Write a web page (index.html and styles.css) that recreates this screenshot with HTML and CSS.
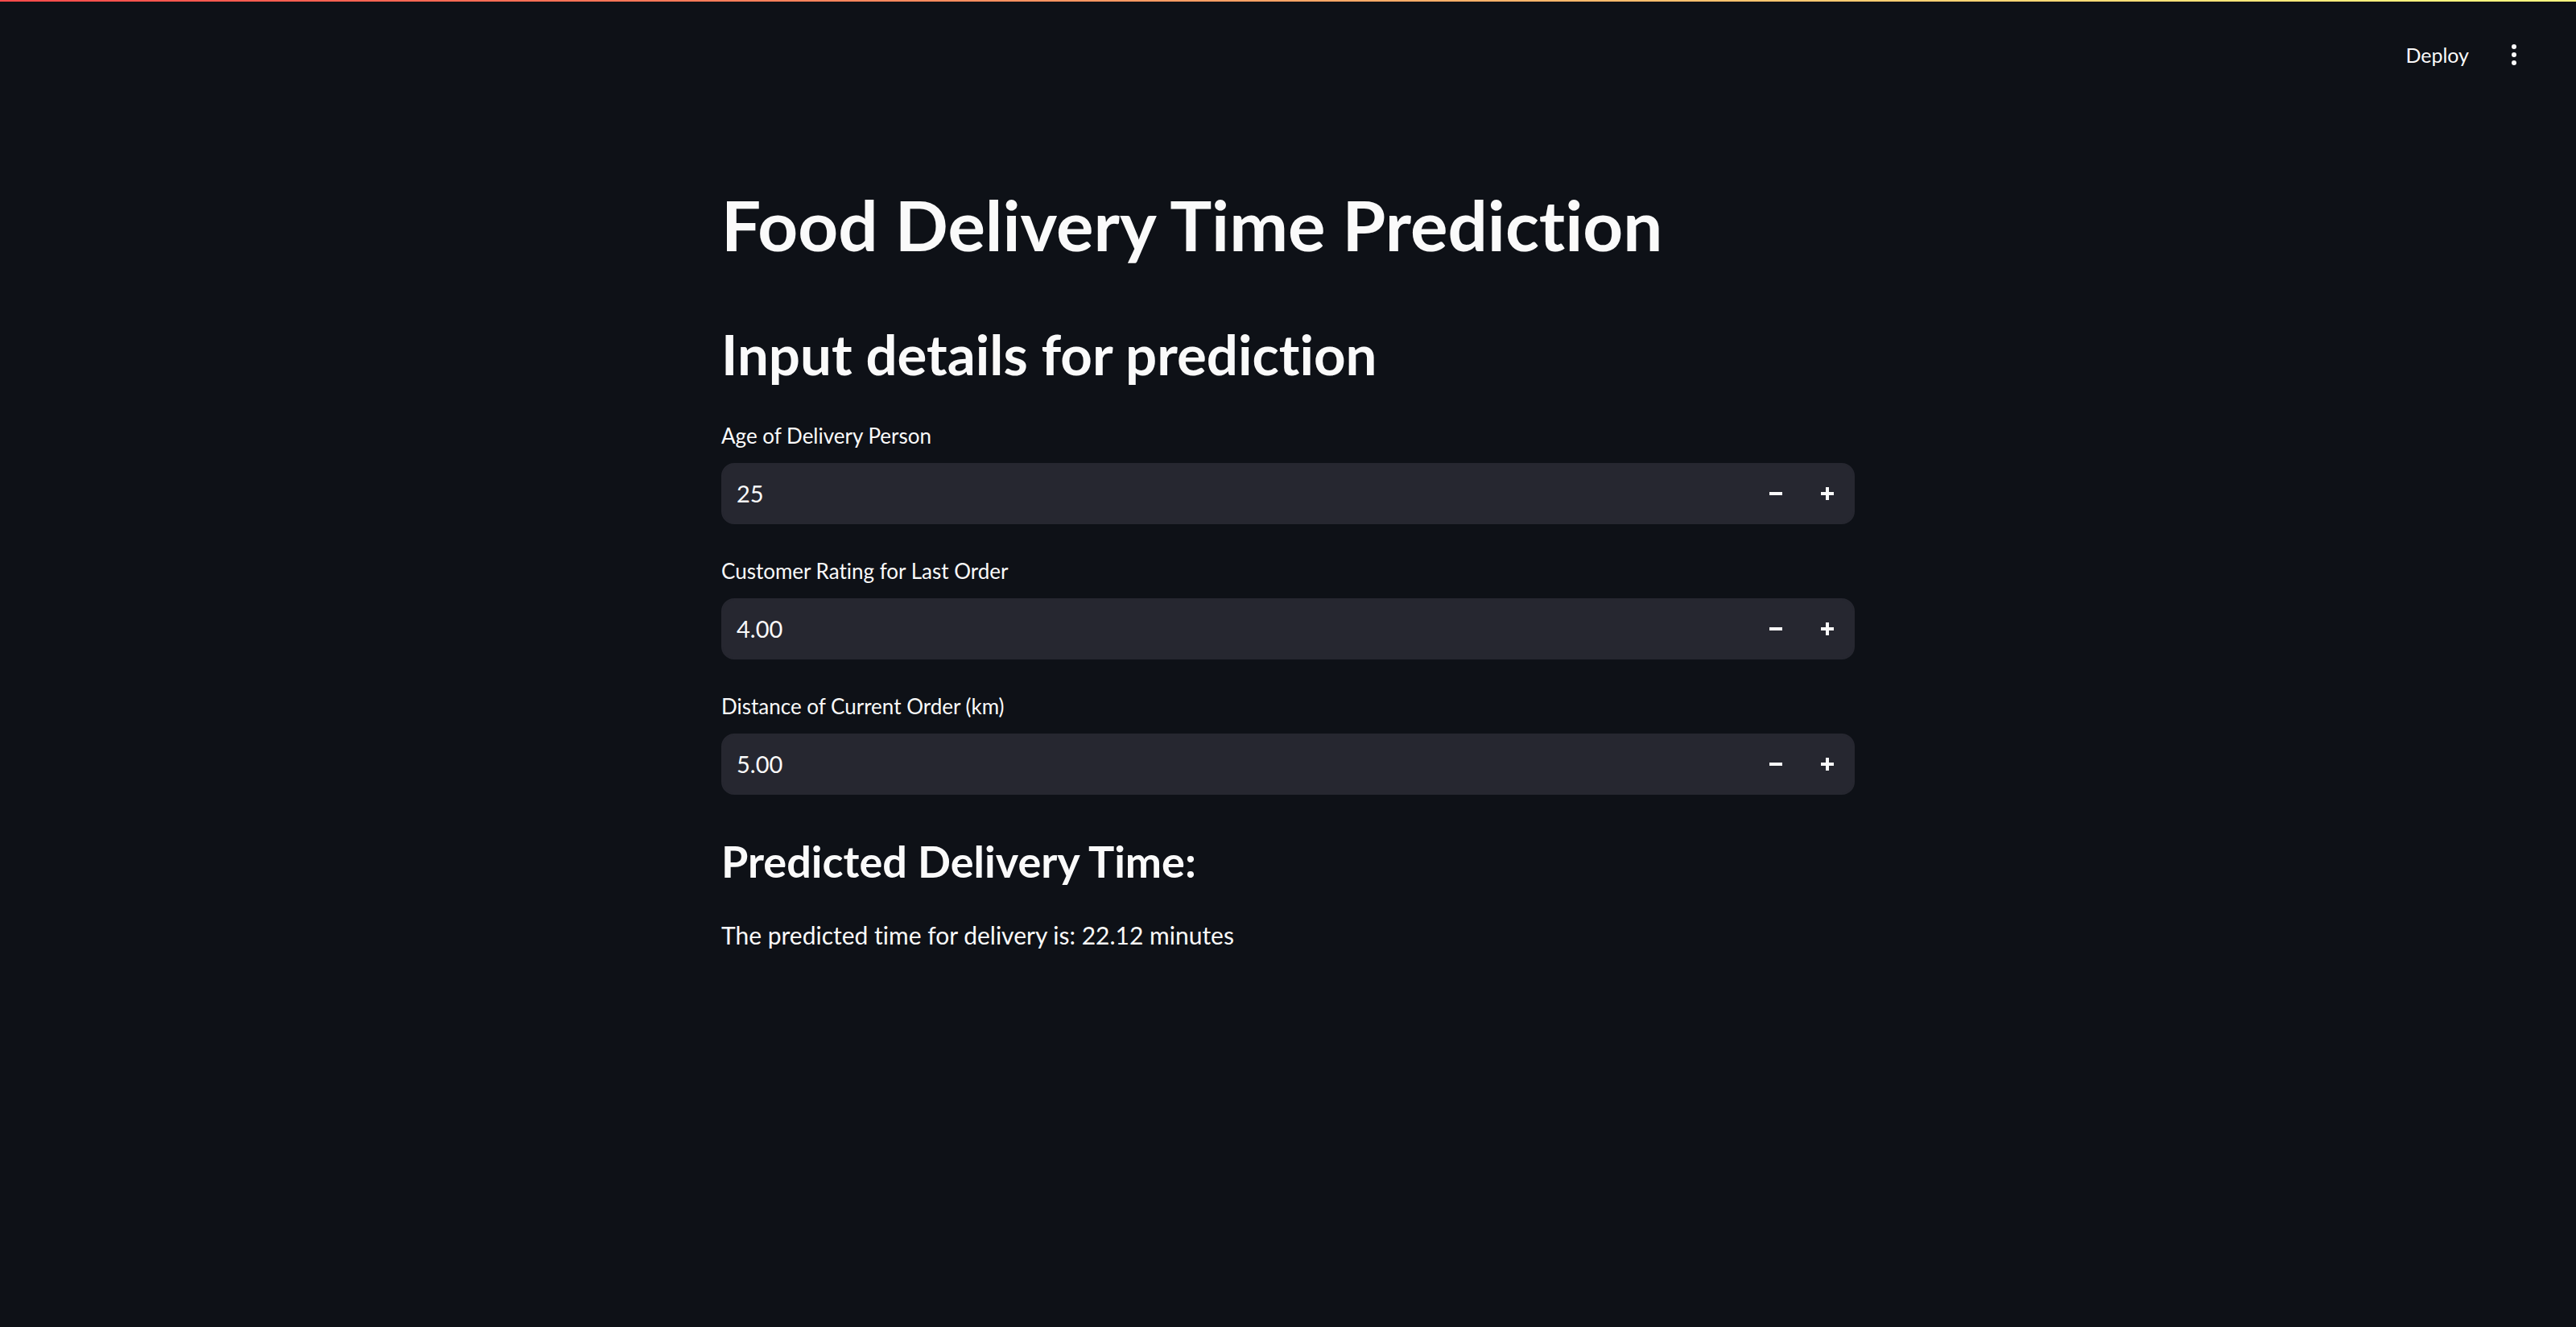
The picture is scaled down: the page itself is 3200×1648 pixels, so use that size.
FILE: index.html
```html
<!DOCTYPE html>
<html lang="en">
<head>
<meta charset="utf-8">
<title>Food Delivery Time Prediction</title>
<link rel="stylesheet" href="styles.css">
</head>
<body>
<div class="deco"></div>
<header class="topbar">
  <div class="toolbar">
    <span class="deploy">Deploy</span>
    <span class="menu" aria-label="Main menu">
      <svg width="6" height="26" viewBox="0 0 6 26"><circle cx="3" cy="3" r="3" fill="#fafafa"/><circle cx="3" cy="13" r="3" fill="#fafafa"/><circle cx="3" cy="23" r="3" fill="#fafafa"/></svg>
    </span>
  </div>
</header>
<main class="block">
  <h1 class="title">Food Delivery Time Prediction</h1>
  <h2 class="subtitle">Input details for prediction</h2>

  <div class="field">
    <label class="label">Age of Delivery Person</label>
    <div class="numinput">
      <span class="value">25</span>
      <span class="step"><svg width="16" height="16" viewBox="0 0 16 16"><rect x="0" y="6" width="16" height="4" fill="#fafafa"/></svg></span>
      <span class="step"><svg width="16" height="16" viewBox="0 0 16 16"><rect x="0" y="6" width="16" height="4" fill="#fafafa"/><rect x="6" y="0" width="4" height="16" fill="#fafafa"/></svg></span>
    </div>
  </div>

  <div class="field">
    <label class="label">Customer Rating for Last Order</label>
    <div class="numinput">
      <span class="value">4.00</span>
      <span class="step"><svg width="16" height="16" viewBox="0 0 16 16"><rect x="0" y="6" width="16" height="4" fill="#fafafa"/></svg></span>
      <span class="step"><svg width="16" height="16" viewBox="0 0 16 16"><rect x="0" y="6" width="16" height="4" fill="#fafafa"/><rect x="6" y="0" width="4" height="16" fill="#fafafa"/></svg></span>
    </div>
  </div>

  <div class="field">
    <label class="label">Distance of Current Order (km)</label>
    <div class="numinput">
      <span class="value">5.00</span>
      <span class="step"><svg width="16" height="16" viewBox="0 0 16 16"><rect x="0" y="6" width="16" height="4" fill="#fafafa"/></svg></span>
      <span class="step"><svg width="16" height="16" viewBox="0 0 16 16"><rect x="0" y="6" width="16" height="4" fill="#fafafa"/><rect x="6" y="0" width="4" height="16" fill="#fafafa"/></svg></span>
    </div>
  </div>

  <h3 class="result-head">Predicted Delivery Time:</h3>
  <p class="result">The predicted time for delivery is: 22.12 minutes</p>
</main>
</body>
</html>
```
FILE: styles.css
```css
html, body {
  margin: 0;
  padding: 0;
  background: #0e1117;
  color: #fafafa;
  font-family: "Lato", "Noto Sans", sans-serif;
  font-variant-ligatures: none;
}

.deco {
  height: 2px;
  background: linear-gradient(90deg, rgb(255, 75, 75), rgb(255, 253, 128));
}

.topbar {
  height: 118px;
  box-sizing: border-box;
  padding: 51px 74px 0 0;
  display: flex;
  justify-content: flex-end;
  align-items: flex-start;
}

.toolbar {
  display: flex;
  align-items: center;
  gap: 53px;
  height: 30px;
}

.deploy {
  font-size: 25px;
  line-height: 30px;
  color: #fafafa;
}

.menu {
  display: flex;
  align-items: center;
}

.menu svg {
  display: block;
}

.block {
  width: 1408px;
  margin: 0 auto;
  padding-top: 107px;
  display: flex;
  flex-direction: column;
}

.title {
  margin: 0;
  font-size: 87px;
  line-height: 1.2;
  font-weight: 700;
}

.subtitle {
  margin: 68px 0 0;
  font-size: 69px;
  line-height: 1.2;
  font-weight: 700;
}

.field {
  display: flex;
  flex-direction: column;
  margin-top: 43px;
}

.field:first-of-type {
  margin-top: 44px;
}

.label {
  font-size: 26px;
  line-height: 30px;
}

.numinput {
  margin-top: 19px;
  height: 76px;
  box-sizing: border-box;
  border: 2px solid #262730;
  border-radius: 16px;
  background: #262730;
  display: flex;
  align-items: center;
}

.value {
  flex: 1;
  padding-left: 17px;
  font-size: 29px;
  line-height: 34.8px;
}

.step {
  width: 64px;
  height: 72px;
  display: flex;
  align-items: center;
  justify-content: center;
}

.step svg {
  display: block;
}

.result-head {
  margin: 51px 0 0;
  font-size: 54px;
  line-height: 1.2;
  font-weight: 700;
}

.result {
  margin: 40px 0 0;
  font-size: 30px;
  line-height: 1.2;
}
```
